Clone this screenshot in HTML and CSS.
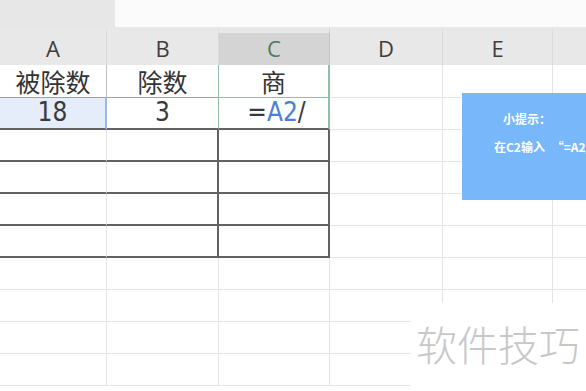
FILE: index.html
```html
<!DOCTYPE html>
<html lang="zh-CN">
<head>
    <meta charset="UTF-8">
    <title>除法公式</title>
    <link rel="stylesheet" href="styles.css">
</head>
<body>
    <div class="window">
        <!-- strip above the column headers -->
        <div class="topbar">
            <div class="corner"></div>
            <div class="blank"></div>
        </div>

        <div class="grid">
            <!-- column headers -->
            <div class="head">A</div>
            <div class="head">B</div>
            <div class="head head-active">C</div>
            <div class="head">D</div>
            <div class="head">E</div>
            <div class="head"></div>

            <!-- row 1 -->
            <div class="cell t-mid">被除数</div>
            <div class="cell t-mid t-before-sel">除数</div>
            <div class="cell t-sel">商</div>
            <div class="cell"></div>
            <div class="cell"></div>
            <div class="cell"></div>

            <!-- row 2 -->
            <div class="cell num t-ref t-dark-b">18</div>
            <div class="cell num t-before-sel t-dark-b">3</div>
            <div class="cell num t-sel t-dark-b"><span class="formula">=<span class="ref">A2</span>/</span></div>
            <div class="cell"></div>
            <div class="cell"></div>
            <div class="cell"></div>

            <!-- rows 3-6: empty bordered table -->
            <div class="cell t-dark-b"></div>
            <div class="cell t-dark-b t-dark-r"></div>
            <div class="cell t-dark-b t-dark-r"></div>
            <div class="cell"></div>
            <div class="cell"></div>
            <div class="cell"></div>

            <div class="cell t-dark-b"></div>
            <div class="cell t-dark-b t-dark-r"></div>
            <div class="cell t-dark-b t-dark-r"></div>
            <div class="cell"></div>
            <div class="cell"></div>
            <div class="cell"></div>

            <div class="cell t-dark-b"></div>
            <div class="cell t-dark-b t-dark-r"></div>
            <div class="cell t-dark-b t-dark-r"></div>
            <div class="cell"></div>
            <div class="cell"></div>
            <div class="cell"></div>

            <div class="cell t-dark-b"></div>
            <div class="cell t-dark-b t-dark-r"></div>
            <div class="cell t-dark-b t-dark-r"></div>
            <div class="cell"></div>
            <div class="cell"></div>
            <div class="cell"></div>

            <!-- plain rows -->
            <div class="cell"></div><div class="cell"></div><div class="cell"></div>
            <div class="cell"></div><div class="cell"></div><div class="cell"></div>

            <div class="cell"></div><div class="cell"></div><div class="cell"></div>
            <div class="cell"></div><div class="cell"></div><div class="cell"></div>

            <div class="cell"></div><div class="cell"></div><div class="cell"></div>
            <div class="cell"></div><div class="cell"></div><div class="cell"></div>

            <div class="cell"></div><div class="cell"></div><div class="cell"></div>
            <div class="cell"></div><div class="cell"></div><div class="cell"></div>
        </div>

        <!-- floating hint shape -->
        <div class="hint">
            <p class="hint-title">小提示：</p>
            <p class="hint-text">在C2输入 “=A2/B2”</p>
        </div>

        <!-- watermark -->
        <div class="watermark">软件技巧</div>
    </div>
</body>
</html>
```

FILE: styles.css
```css
* { margin: 0; padding: 0; box-sizing: border-box; }

body {
    width: 586px;
    height: 391px;
    overflow: hidden;
    background-color: #fff;
    font-family: "Noto Sans CJK SC", "Noto Sans", sans-serif;
}

.window {
    position: relative;
    width: 586px;
    height: 391px;
    overflow: hidden;
}

.topbar {
    display: flex;
    height: 27px;
}

.corner {
    width: 115px;
    background-color: #e7e7e7;
}

.blank {
    flex: 1;
    background-color: #fbfbfb;
}

.grid {
    display: grid;
    grid-template-columns: 107px 112px 111px 113px 110px 110px;
    grid-template-rows: 38px 33px repeat(10, 32px);
}

/* column headers */
.head {
    display: flex;
    align-items: flex-end;
    justify-content: center;
    padding-bottom: 3px;
    background-color: #e8e8e8;
    border-right: 1px solid #dadada;
    border-top: 6px solid #e8e8e8;
    font-family: "Open Sans", "Liberation Sans", sans-serif;
    font-size: 22px;
    line-height: 28px;
    color: #3d3d3d;
}

.head-active {
    background-color: #d4d4d4;
    color: #4d7a63;
    border-right-color: #c4c4c4;
}

/* cells */
.cell {
    display: flex;
    align-items: center;
    justify-content: center;
    border-right: 1px solid #e4e4e4;
    border-bottom: 1px solid #e4e4e4;
    font-size: 25px;
    color: #333;
    line-height: 1;
}

.num {
    font-family: "Liberation Sans Narrow", "DejaVu Sans Condensed", "Liberation Sans", sans-serif;
    font-size: 26px;
    padding-bottom: 3px;
    color: #3a3a3a;
}

.t-mid {
    border-bottom-color: #a0a0a0;
    border-right-color: #c0c0c0;
}

.t-before-sel {
    border-right-color: #8fbfa6;
}

.t-sel {
    border-right: 2px solid #8fbfa6;
    border-bottom-color: #8fbfa6;
}

.t-ref {
    background-color: #e5edfb;
    border-right: 2px solid #9bb8ea;
}

.t-dark-b {
    border-bottom: 2px solid #626262;
}

.t-dark-r {
    border-right: 2px solid #626262;
}

.formula {
    padding-left: 6px;
}

.ref {
    color: #4a7fd4;
}

/* blue hint box */
.hint {
    position: absolute;
    left: 462px;
    top: 93px;
    width: 160px;
    height: 107px;
    background-color: #77b7fa;
    color: #fff;
    font-size: 12px;
    font-weight: bold;
}

.hint-title {
    margin: 17px 0 0 41px;
}

.hint-text {
    margin: 11px 0 0 32px;
    white-space: nowrap;
    word-spacing: 4px;
}

/* watermark over the lower right */
.watermark {
    position: absolute;
    left: 410px;
    top: 303px;
    width: 176px;
    height: 88px;
    background-color: #fff;
    padding: 18px 0 0 6px;
    font-size: 41px;
    line-height: 1.1;
    font-weight: 300;
    color: #c8c8c8;
    white-space: nowrap;
}
```
